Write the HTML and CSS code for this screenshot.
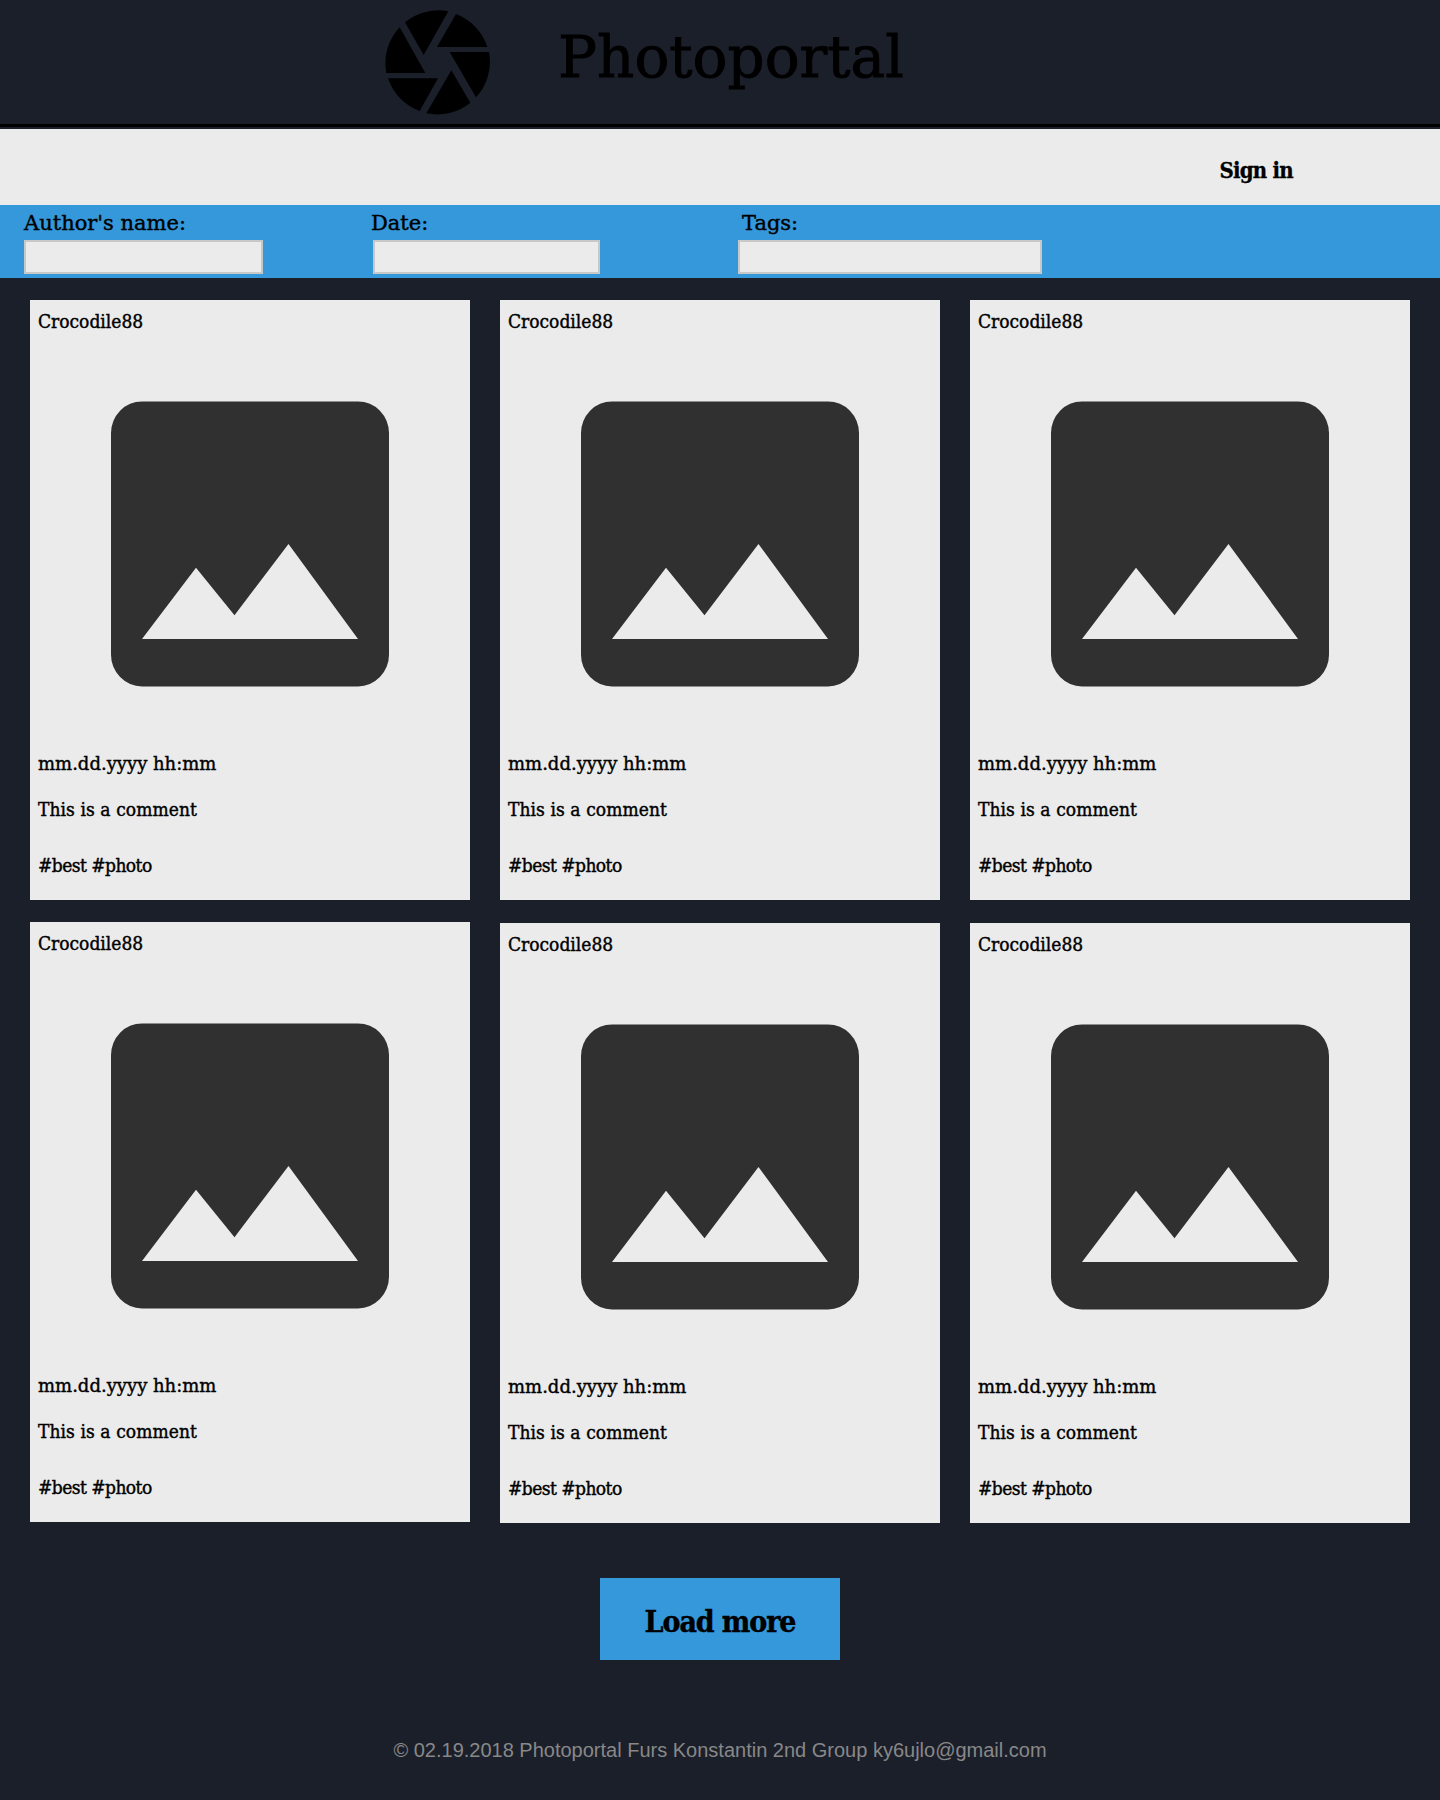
FILE: index.html
```html
<!DOCTYPE html>
<html lang="en">
<head>
<meta charset="utf-8">
<title>Photoportal</title>
<link rel="stylesheet" href="styles.css">
</head>
<body>
<svg width="0" height="0" class="sprite">
  <symbol id="placeholder" viewBox="0 -0.4 278 286" preserveAspectRatio="none">
    <path fill="#303030" fill-rule="evenodd" d="M31 0H247A31 31.7 0 0 1 278 31.700V253.300A31 31.700 0 0 1 247 285H31A31 31.700 0 0 1 0 253.300V31.700A31 31.700 0 0 1 31 0ZM31 237.500H247L177.500 142.500L123.500 213.800L85 166.300Z"/>
  </symbol>
</svg>
<header class="header">
  <svg class="logo" width="105" height="105" viewBox="45 30 315 315">
    <path d="M105 67A157 157 0 0 1 235 34L161 165ZM258 42A157 157 0 0 1 352 141H201ZM357 156A157 157 0 0 1 318 292L239 156ZM301 308A157 157 0 0 1 169 340L244 211ZM149 333A157 157 0 0 1 54 235H204ZM49 219A157 157 0 0 1 89 82L166 219Z"/>
  </svg>
  <h1 class="title">Photoportal</h1>
</header>
<nav class="nav"><a class="signin">Sign in</a></nav>
<form class="filters">
  <label class="field field-author"><span class="label">Author's name:</span><input class="input" type="text"></label>
  <label class="field field-date"><span class="label">Date:</span><input class="input" type="text"></label>
  <label class="field field-tags"><span class="label">Tags:</span><input class="input" type="text"></label>
</form>
<main class="grid">
  <article class="card">
    <p class="author">Crocodile88</p>
    <svg class="photo"><use href="#placeholder"/></svg>
    <p class="date">mm.dd.yyyy hh:mm</p>
    <p class="comment">This is a comment</p>
    <p class="tags">#best #photo</p>
  </article>
  <article class="card">
    <p class="author">Crocodile88</p>
    <svg class="photo"><use href="#placeholder"/></svg>
    <p class="date">mm.dd.yyyy hh:mm</p>
    <p class="comment">This is a comment</p>
    <p class="tags">#best #photo</p>
  </article>
  <article class="card">
    <p class="author">Crocodile88</p>
    <svg class="photo"><use href="#placeholder"/></svg>
    <p class="date">mm.dd.yyyy hh:mm</p>
    <p class="comment">This is a comment</p>
    <p class="tags">#best #photo</p>
  </article>
  <article class="card card-raised">
    <p class="author">Crocodile88</p>
    <svg class="photo"><use href="#placeholder"/></svg>
    <p class="date">mm.dd.yyyy hh:mm</p>
    <p class="comment">This is a comment</p>
    <p class="tags">#best #photo</p>
  </article>
  <article class="card">
    <p class="author">Crocodile88</p>
    <svg class="photo"><use href="#placeholder"/></svg>
    <p class="date">mm.dd.yyyy hh:mm</p>
    <p class="comment">This is a comment</p>
    <p class="tags">#best #photo</p>
  </article>
  <article class="card">
    <p class="author">Crocodile88</p>
    <svg class="photo"><use href="#placeholder"/></svg>
    <p class="date">mm.dd.yyyy hh:mm</p>
    <p class="comment">This is a comment</p>
    <p class="tags">#best #photo</p>
  </article>
</main>
<button class="more" type="button">Load more</button>
<footer class="footer">© 02.19.2018 Photoportal Furs Konstantin 2nd Group ky6ujlo@gmail.com</footer>
</body>
</html>
```
FILE: styles.css
```css
* { box-sizing: border-box; }

body {
  margin: 0;
  min-height: 1800px;
  display: flex;
  flex-direction: column;
  background: #1b1f2a;
  color: #000;
  font-family: "DejaVu Serif Condensed", "DejaVu Serif", serif;
}

p, h1 { margin: 0; }

.sprite { display: none; }

.header {
  height: 127px;
  margin-bottom: 2px;
  border-bottom: 3px solid #000;
  padding-left: 385px;
  display: flex;
  align-items: flex-start;
}

.logo { margin-top: 10px; }

.title {
  margin-left: 68px;
  font-family: "DejaVu Serif", serif;
  font-size: 58px;
  font-weight: 400;
  line-height: 114px;
  -webkit-text-stroke: 0.9px #000;
}

.nav {
  height: 76px;
  padding-right: 147px;
  background: #ebebeb;
  display: flex;
  justify-content: flex-end;
}

.signin {
  font-size: 22px;
  font-weight: 700;
  line-height: 82px;
  letter-spacing: -0.75px;
  -webkit-text-stroke: 0.3px #000;
}

.filters {
  height: 73px;
  padding-left: 24px;
  background: #3498db;
  display: flex;
}

.field {
  display: flex;
  flex-direction: column;
  -webkit-text-stroke: 0.4px #000;
}

.label {
  height: 35px;
  font-family: "DejaVu Serif", serif;
  font-size: 21px;
  line-height: 37px;
}

.input {
  height: 34px;
  border: 2px solid #c8c8c8;
  background: #ebebeb;
  padding: 0 6px;
}

.field-author { width: 239px; }
.field-date { width: 227px; margin-left: 110px; }
.field-tags { width: 304px; margin-left: 138px; }
.field-date .label { margin-left: -2px; }
.field-tags .label { margin-left: 4px; }

.grid {
  margin: 22px 30px 0;
  display: grid;
  grid-template-columns: repeat(3, 440px);
  grid-auto-rows: 600px;
  gap: 23px 30px;
}

.card {
  height: 600px;
  padding: 9px 8px 0;
  background: #ebebeb;
  display: flex;
  flex-direction: column;
  font-size: 19px;
  line-height: 24px;
  -webkit-text-stroke: 0.4px #000;
}

.card-raised { margin-top: -1px; }

.photo {
  width: 278px;
  height: 286px;
  margin: 68px 0 65px;
  align-self: center;
  -webkit-text-stroke: 0;
}

.date {
  font-family: "DejaVu Serif", serif;
  font-size: 18px;
}

.comment { margin-top: 21px; letter-spacing: 0.08px; }
.tags { margin-top: 32px; letter-spacing: -0.54px; }

.more {
  width: 240px;
  height: 82px;
  margin: 55px auto 0;
  padding: 4px 0 0;
  border: 0;
  background: #3498db;
  color: #000;
  font: 700 30px "DejaVu Serif Condensed", "DejaVu Serif", serif;
  letter-spacing: -1.1px;
  -webkit-text-stroke: 0.4px #000;
}

.footer {
  margin-top: 78px;
  text-align: center;
  color: #888;
  font: 20px/24px "Liberation Sans", Arial, sans-serif;
}
```
